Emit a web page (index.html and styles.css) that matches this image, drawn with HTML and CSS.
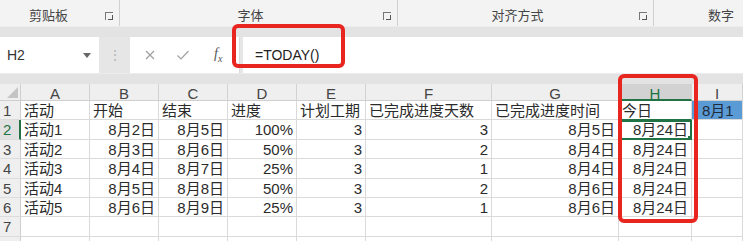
FILE: index.html
```html
<!DOCTYPE html>
<html lang="zh-CN">
<head>
    <meta charset="UTF-8">
    <title>TODAY</title>
    <link rel="stylesheet" href="styles.css">
</head>
<body>
    <div class="window">
        <div class="ribbon">
            <div class="group g-clip"><span></span><span class="label">剪贴板</span><span class="launch"></span></div>
            <div class="group g-font"><span></span><span class="label">字体</span><span class="launch"></span></div>
            <div class="group g-align"><span></span><span class="label">对齐方式</span><span class="launch"></span></div>
            <div class="group g-num"><span class="label">数字</span></div>
        </div>
        <div class="band"></div>
        <div class="formula-bar">
            <div class="name-box">H2<span class="caret"></span></div>
            <div class="dots">⋮</div>
            <div class="fx-box">
                <svg width="12" height="12" viewBox="0 0 12 12"><path d="M2 2 L10 10 M10 2 L2 10" stroke="#a0a0a0" stroke-width="1.2"/></svg>
                <svg width="14" height="12" viewBox="0 0 14 12"><path d="M1.5 6.5 L5 10 L12.5 2" stroke="#a0a0a0" stroke-width="1.2" fill="none"/></svg>
                <span class="fx"><i>f</i><sub>x</sub></span>
            </div>
            <div class="formula">=TODAY()</div>
        </div>
        <div class="band"></div>
        <div class="sheet">
            <div class="corner"><span class="tri"></span></div>
            <div class="colh">A</div><div class="colh">B</div><div class="colh">C</div><div class="colh">D</div>
            <div class="colh">E</div><div class="colh">F</div><div class="colh">G</div><div class="colh sel">H</div><div class="colh">I</div>

            <div class="rowh">1</div>
            <div class="c">活动</div><div class="c">开始</div><div class="c">结束</div><div class="c">进度</div>
            <div class="c">计划工期</div><div class="c">已完成进度天数</div><div class="c">已完成进度时间</div>
            <div class="c hcol">今日</div><div class="c blue">8月1</div>

            <div class="rowh act">2</div>
            <div class="c">活动1</div><div class="c r">8月2日</div><div class="c r">8月5日</div><div class="c r">100%</div>
            <div class="c r">3</div><div class="c r">3</div><div class="c r">8月5日</div>
            <div class="c r cur">8月24日<span class="handle"></span></div><div class="c"></div>

            <div class="rowh">3</div>
            <div class="c">活动2</div><div class="c r">8月3日</div><div class="c r">8月6日</div><div class="c r">50%</div>
            <div class="c r">3</div><div class="c r">2</div><div class="c r">8月4日</div>
            <div class="c r">8月24日</div><div class="c"></div>

            <div class="rowh">4</div>
            <div class="c">活动3</div><div class="c r">8月4日</div><div class="c r">8月7日</div><div class="c r">25%</div>
            <div class="c r">3</div><div class="c r">1</div><div class="c r">8月4日</div>
            <div class="c r">8月24日</div><div class="c"></div>

            <div class="rowh">5</div>
            <div class="c">活动4</div><div class="c r">8月5日</div><div class="c r">8月8日</div><div class="c r">50%</div>
            <div class="c r">3</div><div class="c r">2</div><div class="c r">8月6日</div>
            <div class="c r">8月24日</div><div class="c"></div>

            <div class="rowh">6</div>
            <div class="c">活动5</div><div class="c r">8月6日</div><div class="c r">8月9日</div><div class="c r">25%</div>
            <div class="c r">3</div><div class="c r">1</div><div class="c r">8月6日</div>
            <div class="c r">8月24日</div><div class="c"></div>

            <div class="rowh">7</div>
            <div class="c"></div><div class="c"></div><div class="c"></div><div class="c"></div>
            <div class="c"></div><div class="c"></div><div class="c"></div><div class="c"></div><div class="c"></div>

            <div class="rowh"></div>
            <div class="c"></div><div class="c"></div><div class="c"></div><div class="c"></div>
            <div class="c"></div><div class="c"></div><div class="c"></div><div class="c"></div><div class="c"></div>
        </div>

        <!-- red callouts drawn over the screenshot -->
        <div class="mark mark-formula"></div>
        <div class="mark mark-col"></div>
    </div>
</body>
</html>
```

FILE: styles.css
```css
body {
    margin: 0;
    font-family: "Liberation Sans", "Noto Sans CJK SC", sans-serif;
    color: #2b2b2b;
    background: #e6e6e6;
}
.window {
    position: relative;
    width: 743px;
    height: 241px;
    overflow: hidden;
}
.ribbon {
    display: flex;
    height: 26px;
    background: #f3f3f3;
    font-size: 13px;
    color: #444;
}
.group {
    display: grid;
    grid-template-columns: 1fr auto 1fr;
    align-items: center;
    border-right: 1px solid #d0d0d0;
    box-sizing: border-box;
    padding-top: 2px;
    padding-right: 16px;
}
.group .launch { margin-right: -10px; }
.g-clip { width: 120px; padding-right: 22px; }
.g-clip .launch { margin-right: -16px; }
.g-font { width: 278px; }
.g-align { width: 256px; }
.g-num { flex: 1; border-right: none; display: flex; justify-content: flex-end; padding-right: 9px; }
.launch {
    justify-self: end;
    margin-top: 4px;
    width: 7px;
    height: 7px;
    border-left: 1px solid #777;
    border-top: 1px solid #777;
    position: relative;
}
.launch::after {
    content: "";
    position: absolute;
    left: 2px;
    top: 2px;
    width: 4px;
    height: 4px;
    border-right: 1px solid #555;
    border-bottom: 1px solid #555;
}
.band {
    height: 11px;
    background: #e3e3e3;
    border-top: 1px solid #ececec;
    box-sizing: border-box;
}
.formula-bar {
    display: flex;
    height: 36px;
    background: #e6e6e6;
}
.name-box {
    width: 99px;
    background: #fff;
    display: flex;
    align-items: center;
    justify-content: space-between;
    padding: 0 8px 0 7px;
    box-sizing: border-box;
    font-size: 14px;
    color: #333;
}
.caret {
    width: 0;
    height: 0;
    border-left: 4px solid transparent;
    border-right: 4px solid transparent;
    border-top: 5px solid #666;
}
.dots {
    width: 31px;
    text-align: center;
    line-height: 36px;
    color: #b8b8b8;
    font-size: 14px;
}
.fx-box {
    width: 110px;
    background: #fff;
    display: flex;
    align-items: center;
    gap: 20px;
    padding-left: 14px;
    box-sizing: border-box;
    border-right: 1px solid #dadada;
}
.fx {
    font-family: "Liberation Serif", serif;
    font-size: 14px;
    color: #555;
    margin-left: 4px;
}
.fx sub { font-size: 10px; font-style: italic; }
.formula {
    flex: 1;
    margin-left: 3px;
    background: #fff;
    font-size: 14px;
    line-height: 36px;
    padding-left: 12px;
    color: #222;
}
.sheet {
    display: grid;
    grid-template-columns: 21px 69px 69px 69px 69px 69px 126px 127px 73px 1fr;
    grid-template-rows: 17px repeat(8, 19.4px);
    background: #fff;
    font-size: 15px;
}
.corner, .colh, .rowh {
    background: #efefef;
    color: #444;
    box-sizing: border-box;
}
.corner {
    border-right: 1px solid #cfcfcf;
    border-bottom: 1px solid #cfcfcf;
    position: relative;
}
.tri {
    position: absolute;
    right: 2px;
    bottom: 2px;
    width: 0;
    height: 0;
    border-left: 11px solid transparent;
    border-bottom: 11px solid #c4c4c4;
}
.colh {
    text-align: center;
    line-height: 20px;
    border-right: 1px solid #d2d2d2;
    border-bottom: 1px solid #cfcfcf;
}
.colh.sel {
    background: #d2d2d2;
    color: #217346;
    border-bottom: 2px solid #217346;
}
.rowh {
    padding-left: 3px;
    line-height: 19px;
    border-right: 1px solid #cfcfcf;
    border-bottom: 1px solid #dcdcdc;
}
.rowh.act {
    color: #217346;
    background: #e1e1e1;
    border-right: 2px solid #217346;
}
.c {
    padding: 0 3px;
    line-height: 19px;
    white-space: nowrap;
    overflow: hidden;
    border-right: 1px solid #dadada;
    border-bottom: 1px solid #dadada;
    box-sizing: border-box;
}
.c.r { text-align: right; }
.c.hcol { border-bottom: 1px solid #217346; }
.c.blue {
    background: #5b9bd5;
    color: #1f2b3a;
    padding-left: 10px;
    overflow: visible;
}
.c.cur {
    position: relative;
    border: 2px solid #217346;
    line-height: 16px;
    padding-right: 2px;
}
.handle {
    position: absolute;
    right: -4px;
    bottom: -4px;
    width: 5px;
    height: 5px;
    background: #217346;
    border: 1px solid #fff;
}
.mark {
    position: absolute;
    border: 4px solid #e8261f;
    border-radius: 6px;
    box-sizing: border-box;
}
.mark-formula {
    left: 232px;
    top: 24px;
    width: 113px;
    height: 44px;
}
.mark-col {
    left: 618px;
    top: 74px;
    width: 80px;
    height: 149px;
}
```
